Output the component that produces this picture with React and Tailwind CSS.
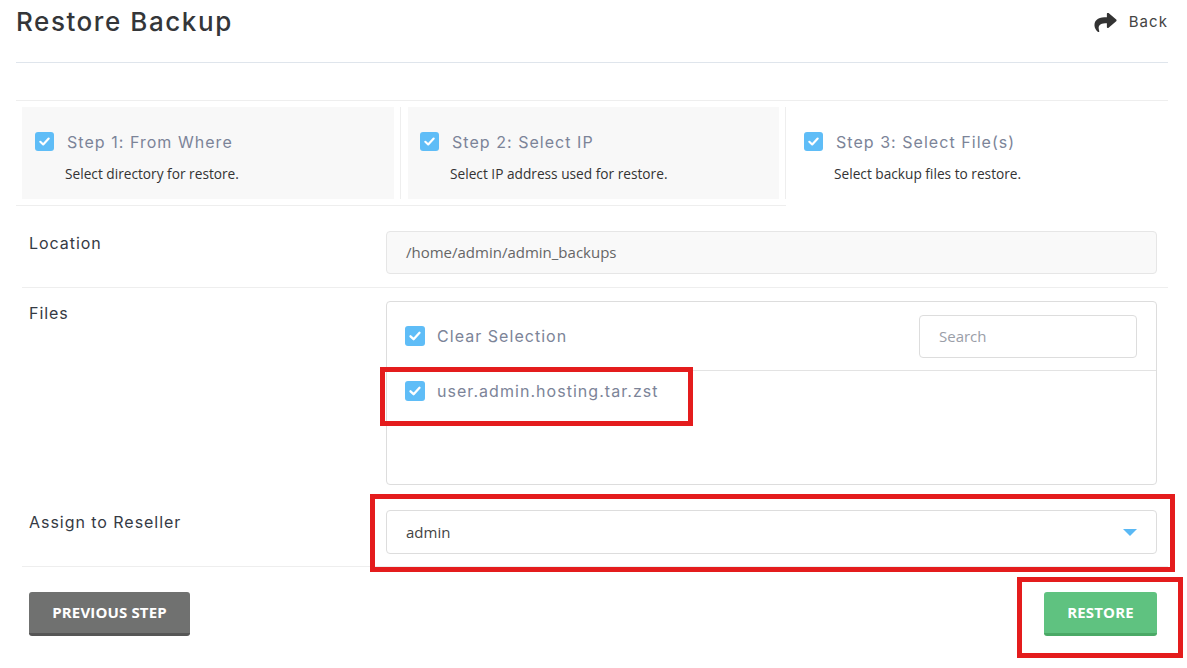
import React from "react";

const HEAD = { fontFamily: "Inter, 'Noto Sans', sans-serif" };
const BODY = { fontFamily: "'Open Sans', 'Noto Sans', sans-serif" };

function Check({ size = 19 }) {
  return (
    <span
      className="flex shrink-0 items-center justify-center rounded-[3px] bg-[#5fbdf7]"
      style={{ width: size, height: size }}
    >
      <svg width={size - 6} height={size - 6} viewBox="0 0 14 14" fill="none">
        <path d="M2.5 7.3 L5.6 10.2 L11.5 3.8" stroke="white" strokeWidth="2.3" strokeLinecap="round" strokeLinejoin="round" />
      </svg>
    </span>
  );
}

function ShareIcon() {
  return (
    <svg width="23" height="19" viewBox="0 0 512 440" fill="#333">
      <path d="M503.691 189.836L327.687 37.851C312.281 24.546 288 35.347 288 56.015v80.053C127.371 137.907 0 170.1 0 322.326c0 61.441 39.581 122.309 83.333 154.132 13.653 9.931 33.111-2.533 28.077-18.631C66.066 312.814 132.917 274.316 288 272.085V360c0 20.7 24.3 31.453 39.687 18.164l176.004-152c11.071-9.562 11.086-26.753 0-36.328z" transform="translate(0,-37)" />
    </svg>
  );
}

function StepContent({ title, desc, pl }) {
  return (
    <div className="flex h-full flex-col" style={{ paddingLeft: pl }}>
      <div className="mt-[25px] flex h-[19px] items-center gap-[13px]">
        <Check />
        <span className="text-[16px] tracking-[0.065em] text-[#7c8498]" style={HEAD}>
          {title}
        </span>
      </div>
      <div className="mt-[14px] text-[13.7px] leading-[18px] text-[#333]" style={{ ...BODY, paddingLeft: 30 }}>
        {desc}
      </div>
    </div>
  );
}

const LABEL = "w-[364px] pl-[7px] text-[16px] leading-[24px] tracking-[0.06em] text-[#353a44]";

export default function App() {
  return (
    <div className="relative min-h-[668px] w-[1187px] bg-white pl-[16px] pr-[19px]" style={BODY}>
      {/* Header */}
      <div className="flex h-[63px] items-start justify-between border-b border-[#dfe5ec]">
        <h1 className="mt-[5px] text-[26px] font-medium leading-[34px] tracking-[0.06em] text-[#343639]" style={HEAD}>
          Restore Backup
        </h1>
        <div className="mt-[12px] flex items-center gap-[12px]">
          <ShareIcon />
          <span className="text-[15px] leading-[20px] tracking-[0.07em] text-[#444]" style={HEAD}>
            Back
          </span>
        </div>
      </div>
      <div className="h-[38px] border-b border-[#eeeeee]" />

      {/* Steps */}
      <div className="flex h-[105px]">
        <div className="flex w-[385px] border-b border-[#eeeeee] py-[6px]">
          <div className="ml-[6px] flex-1 bg-[#f8f8f8]">
            <StepContent title="Step 1: From Where" desc="Select directory for restore." pl={13} />
          </div>
          <div className="ml-[6px] w-px bg-[#eeeeee]" />
        </div>
        <div className="flex w-[385px] border-b border-[#eeeeee] py-[6px]">
          <div className="ml-[7px] flex-1 bg-[#f8f8f8]">
            <StepContent title="Step 2: Select IP" desc="Select IP address used for restore." pl={12} />
          </div>
          <div className="ml-[6px] w-px bg-[#eeeeee]" />
        </div>
        <div className="flex-1 py-[6px]">
          <StepContent title="Step 3: Select File(s)" desc="Select backup files to restore." pl={18} />
        </div>
      </div>

      {/* Location */}
      <div className="ml-[6px] flex border-b border-[#eeeeee] pb-[13px] pr-[11px] pt-[25px]">
        <div className={LABEL} style={HEAD}>
          Location
        </div>
        <div className="flex h-[43px] flex-1 items-center rounded-[4px] border border-[#e6e6e6] bg-[#f9f9f9] px-[19px] text-[15px] text-[#666]">
          /home/admin/admin_backups
        </div>
      </div>

      {/* Files */}
      <div className="ml-[6px] flex pr-[11px] pt-[13px]">
        <div className={LABEL} style={HEAD}>
          Files
        </div>
        <div className="h-[184px] flex-1 rounded-[4px] border border-[#dddddd]">
          <div className="flex h-[69px] items-center justify-between border-b border-[#e3e3e3] pl-[18px] pr-[19px]">
            <div className="flex items-center gap-[12px]">
              <Check size={20} />
              <span className="text-[16px] tracking-[0.065em] text-[#7c8498]" style={HEAD}>
                Clear Selection
              </span>
            </div>
            <div className="flex h-[43px] w-[218px] items-center rounded-[4px] border border-[#dddddd] px-[19px] text-[15px] text-[#9a9ea8]">
              Search
            </div>
          </div>
          <div className="flex items-center gap-[12px] pl-[18px] pt-[10px]">
            <Check size={20} />
            <span className="text-[16px] leading-[20px] tracking-[0.065em] text-[#7c8498]" style={HEAD}>
              user.admin.hosting.tar.zst
            </span>
          </div>
        </div>
      </div>

      {/* Reseller */}
      <div className="ml-[6px] flex border-b border-[#eeeeee] pb-[12px] pr-[11px] pt-[25px]">
        <div className={LABEL} style={HEAD}>
          Assign to Reseller
        </div>
        <div className="flex h-[44px] flex-1 items-center justify-between rounded-[4px] border border-[#dddddd] bg-white pl-[19px] pr-[19px] text-[15px] text-[#444]">
          <span>admin</span>
          <svg width="14" height="7" viewBox="0 0 14 7">
            <path d="M0 0 H14 L7 7 Z" fill="#5ab9f5" />
          </svg>
        </div>
      </div>

      {/* Buttons */}
      <div className="ml-[13px] flex items-start justify-between pr-[11px] pt-[25px]">
        <button className="h-[44px] w-[161px] rounded-[3px] border-b-[3px] border-[#565656] bg-[#707170] text-[15px] font-bold uppercase tracking-[0.01em] text-white" style={BODY}>
          Previous Step
        </button>
        <button className="h-[44px] w-[113px] rounded-[3px] border-b-[3px] border-[#4aa966] bg-[#5fc280] text-[15px] font-bold uppercase tracking-[0.01em] text-white" style={BODY}>
          Restore
        </button>
      </div>

      {/* Annotation boxes */}
      <div className="pointer-events-none absolute left-[380px] top-[367px] h-[59px] w-[313px] border-[5px] border-[#e41c1d]" />
      <div className="pointer-events-none absolute left-[370px] top-[494px] h-[78px] w-[805px] border-[5px] border-[#e41c1d]" />
      <div className="pointer-events-none absolute left-[1017px] top-[577px] h-[81px] w-[166px] border-[5px] border-[#e41c1d]" />
    </div>
  );
}
